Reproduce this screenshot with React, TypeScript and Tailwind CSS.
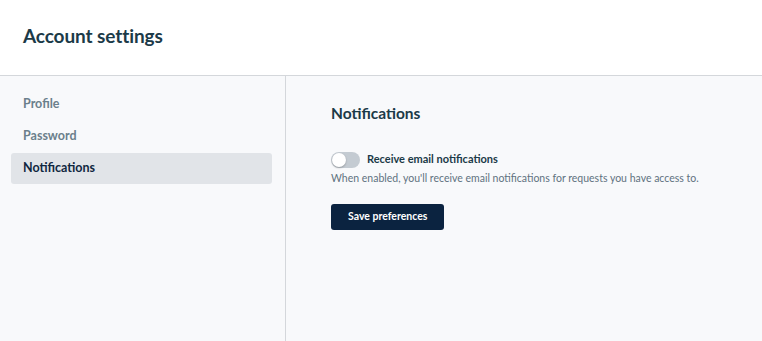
import { useState } from "react";

const navItems = ["Profile", "Password", "Notifications"];

export default function App() {
  const [active, setActive] = useState("Notifications");
  const [enabled, setEnabled] = useState(false);

  return (
    <div className="h-[341px] w-full flex flex-col bg-[#f8f9fb] font-['Lato',sans-serif] overflow-hidden">
      <header className="h-[76px] shrink-0 bg-white border-b border-[#d4d7db] flex items-center px-[23px]">
        <h1 className="text-[19px] font-bold text-[#1b3a48] tracking-[-0.1px] mt-[-2px]">Account settings</h1>
      </header>
      <div className="flex flex-1">
        <nav className="w-[286px] shrink-0 border-r border-[#d4d7db] pl-[11px] pr-[13px] pt-[13px] flex flex-col gap-[1px]">
          {navItems.map((item) => (
            <button
              key={item}
              onClick={() => setActive(item)}
              className={`h-[31px] text-left px-[12px] rounded-[3px] text-[12.5px] font-bold ${
                active === item ? "bg-[#e1e4e8] text-[#0f2740]" : "text-[#6b7f8b]"
              }`}
            >
              {item}
            </button>
          ))}
        </nav>
        <main className="flex-1 pl-[45px] pt-[26px]">
          <h2 className="text-[15.5px] font-bold text-[#1b3a48]">Notifications</h2>
          <div className="mt-[26px] flex items-center gap-[7px]">
            <button
              onClick={() => setEnabled(!enabled)}
              className={`relative w-[29px] h-[16px] rounded-full ${enabled ? "bg-[#0b2340]" : "bg-[#c4cbd2]"}`}
            >
              <span
                className={`absolute top-[1px] w-[14px] h-[14px] rounded-full bg-white shadow-[0_1px_2px_rgba(0,0,0,0.25)] ${
                  enabled ? "left-[14px]" : "left-[1px]"
                }`}
              />
            </button>
            <span className="text-[11px] font-bold text-[#1b3a48]">Receive email notifications</span>
          </div>
          <p className="mt-[3px] text-[10.5px] text-[#5f7280]">
            When enabled, you'll receive email notifications for requests you have access to.
          </p>
          <button className="mt-[17px] h-[26px] px-[17px] rounded-[3px] bg-[#0b2340] text-white text-[10.5px] font-bold">
            Save preferences
          </button>
        </main>
      </div>
    </div>
  );
}
